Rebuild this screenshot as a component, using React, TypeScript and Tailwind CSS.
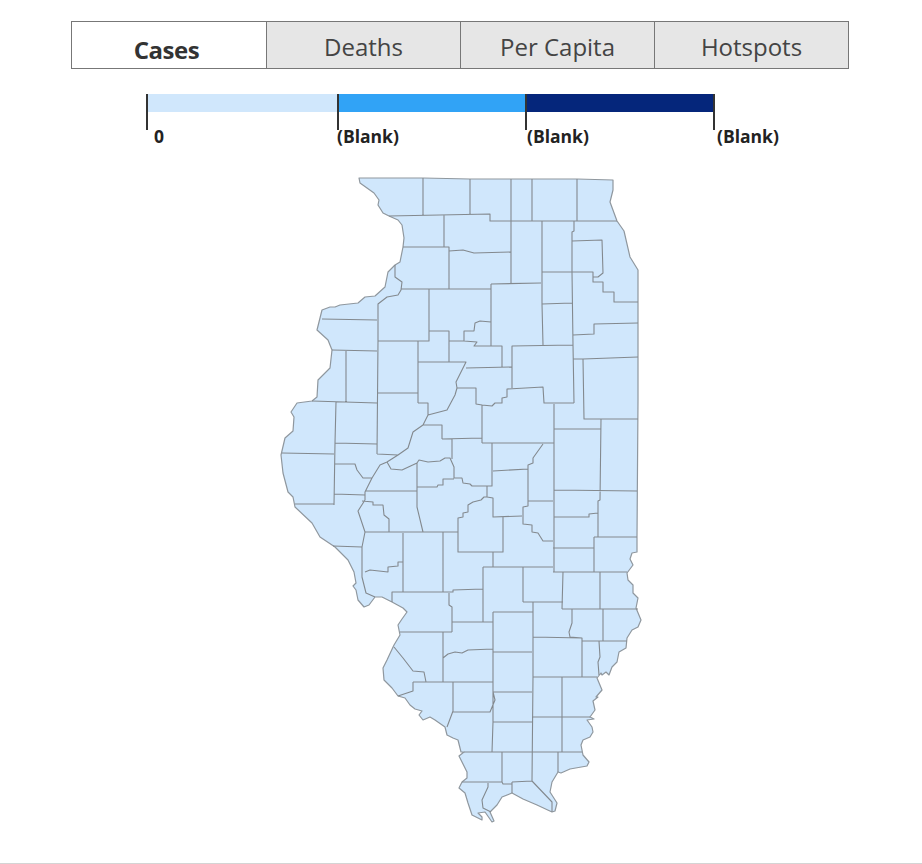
const tabs = ['Cases', 'Deaths', 'Per Capita', 'Hotspots']

const legend = [
  { color: 'bg-[#d0e7fc]', width: 'w-[191px]' },
  { color: 'bg-[#31a3f6]', width: 'w-[188px]' },
  { color: 'bg-[#05267b]', width: 'w-[188px]' },
]

const outline =
  'M359 178 L423 178 L470 179 L511 179 L577 179 L613 180 L613 190 L610 202 L617 221 L624 231 L630 257 L638 270 L638 400 L637 537 L637 552 L632 553 L630 559 L633 565 L627 573 L628 580 L633 585 L633 593 L638 598 L636 608 L641 620 L638 627 L632 630 L627 638 L626 648 L619 652 L617 662 L612 667 L609 675 L606 672 L602 675 L601 673 L597 678 L602 690 L596 697 L598 697 L593 701 L595 710 L590 717 L594 719 L587 720 L592 727 L593 732 L590 737 L583 740 L581 745 L582 750 L583 755 L589 762 L587 766 L570 769 L561 773 L558 772 L552 782 L550 792 L557 803 L555 811 L552 812 L537 805 L523 799 L512 793 L502 797 L497 805 L490 812 L494 821 L492 822 L485 812 L478 813 L482 817 L482 820 L472 815 L468 803 L465 793 L459 788 L462 782 L467 778 L467 772 L459 756 L464 752 L461 752 L458 740 L453 738 L447 735 L445 727 L435 720 L430 717 L423 720 L419 715 L422 711 L415 709 L410 705 L405 698 L398 696 L392 688 L384 680 L383 668 L387 660 L394 645 L400 635 L398 625 L402 619 L407 612 L403 608 L392 602 L382 597 L375 597 L369 605 L364 607 L358 600 L356 590 L353 586 L356 583 L354 572 L348 560 L335 547 L320 537 L312 523 L295 507 L293 497 L288 492 L283 473 L281 455 L285 438 L293 431 L294 417 L291 412 L297 403 L312 401 L317 397 L318 380 L330 368 L332 350 L328 340 L317 330 L322 310 L330 307 L335 307 L340 305 L358 303 L365 297 L375 296 L385 287 L388 272 L395 265 L400 262 L403 247 L404 238 L402 225 L398 220 L389 216 L383 213 L378 205 L379 200 L374 193 L367 188 L360 183 Z'

// county lines, traced from the picture
const counties = [
  'M389 216 L490 214 L490 221 L617 221',
  'M423 178 L423 215 M470 179 L470 214 M511 179 L511 283 M532 179 L532 221 M577 179 L577 221',
  'M444 215 L444 247 M403 247 L449 247 L449 289 M449 251 L463 250 L474 253 L511 252 M401 289 L491 289',
  'M542 221 L542 304 L543 345 M574 221 L574 231 L572 232 L572 272 L573 345 L574 403',
  'M542 272 L572 272 M542 304 L572 303',
  'M572 241 L602 240 L603 273 L598 277 L593 277',
  'M572 272 L593 272 L593 282 L603 282 L603 292 L614 292 L614 302 L638 302',
  'M573 335 L594 334 L594 324 L638 323 M573 359 L583 359 L638 357 M583 359 L584 419 L638 419',
  'M573 345 L512 346 L512 388 M491 284 L541 283 M491 284 L491 346 L502 346 L502 367 M466 368 L512 367',
  'M491 322 L480 321 L475 323 L474 331 L464 331 L464 341 L477 342 L474 346 L491 346',
  'M429 289 L429 331 L449 331 L449 362 M449 341 L464 341 M378 341 L429 341 L429 331',
  'M418 341 L418 403 M418 362 L466 362 L463 368 L456 382 L457 388',
  'M395 265 L395 277 L402 282 L401 290 L398 295 L387 297 L378 304 L378 341 L377 454',
  'M322 319 L377 320 M332 350 L377 351 M346 350 L346 402 M312 401 L377 403 M377 393 L418 393',
  'M418 403 L428 403 L428 415 L423 425 L413 432 L408 448 L398 455 L377 454',
  'M428 415 L447 410 L455 395 L457 388 L476 388 L476 404 L482 405 L482 443',
  'M482 405 L492 406 L495 403 L502 403 L502 398 L507 397 L507 389 L543 387 L544 403 L574 403',
  'M554 404 L554 572 M482 443 L554 443 M554 429 L601 429 M601 419 L600 500 L598 501 L598 537',
  'M554 490 L637 491 M554 517 L589 517 L589 514 L598 513 M553 548 L594 548 M594 537 L637 537 M594 537 L594 572 M553 572 L627 572',
  'M452 439 L452 459 M442 439 L482 438 M423 425 L442 425 L442 439',
  'M492 443 L492 486 L487 486 L487 497 L493 498 L493 517 L522 516 M493 471 L528 469 L528 465 L533 463 L533 458 L543 444',
  'M528 469 L528 506 L523 507 L523 524 L532 525 L532 532 L538 533 L543 541 L553 541 M528 501 L553 501',
  'M503 517 L503 552 L458 552 L458 518 L463 517 L463 513 L468 512 L468 505 L473 502 L481 500 L484 497 L487 497',
  'M493 552 L493 567 L553 567 M483 567 L493 567 M483 567 L483 622 M523 567 L523 602 M563 572 L562 609 M600 572 L600 609',
  'M387 462 L391 469 L402 470 L417 463 L419 460 L428 462 L440 461 L445 458 L450 458 L454 467 L454 478 L462 478 L463 483 L470 484 L472 486 L487 486',
  'M417 463 L417 507 L423 532 M417 487 L437 487 L438 485 L443 485 L443 479 L454 479 M365 491 L417 491',
  'M398 455 L387 462 L380 465 L372 478 L365 492 L365 500 L358 511 L365 532 L362 547 L362 577 L366 593 L375 597',
  'M336 402 L335 443 L334 505 M282 453 L334 454 M295 504 L334 504 M335 443 L377 444 M335 464 L355 464 L357 470 L363 478 L372 478 M334 494 L365 495',
  'M362 501 L373 502 L373 505 L383 505 L384 515 L389 519 L389 532',
  'M365 532 L458 532 M403 533 L403 592 M443 532 L443 592 M333 546 L362 547',
  'M365 572 L370 570 L388 572 L388 567 L398 566 L398 562 L403 562',
  'M392 602 L392 592 L453 592 L453 590 L483 589 M449 593 L449 605 L452 607 L452 632 M400 632 L452 632 M452 622 L493 622',
  'M493 612 L493 692 L495 700 L490 712 L453 712 M493 612 L533 612 M533 602 L533 677 L532 781 M523 602 L563 602',
  'M562 609 L638 609 M572 609 L572 623 L569 632 L570 637 L582 638 L582 677 M533 637 L582 638 M603 609 L603 641 M582 641 L627 641 M599 641 L600 657 L598 662 L599 675',
  'M533 677 L597 677 M562 677 L562 752 M493 652 L532 652 M493 692 L532 692 M493 722 L532 722 M493 692 L493 722 L492 752 M464 752 L582 752 M532 717 L590 717',
  'M502 752 L502 782 M558 752 L558 772 M462 782 L487 782 L502 782 L503 784 L512 784 M512 782 L532 781 L552 802 L552 812 M512 782 L512 793 M488 783 L488 787 L482 800 L483 808 L491 812',
  'M453 682 L453 711 L447 727 M413 682 L493 682 M413 682 L413 691 L398 696 M443 632 L443 682',
  'M394 647 L403 658 L413 671 L424 672 L426 682 M443 658 L448 654 L455 652 L462 653 L468 650 L493 649',
]

export default function App() {
  return (
    <div className="h-[864px] overflow-hidden border-b border-[#d4d4d4] bg-white font-['Open_Sans','Noto_Sans',sans-serif]">
      <div className="ml-[71px] mt-[21px] grid h-[48px] w-[778px] grid-cols-4 border border-[#777]">
        {tabs.map((tab, i) =>
          i === 0 ? (
            <div key={tab} className="flex items-center justify-center pt-[10px] pr-[5px] text-[24px] font-bold tracking-[-0.5px] text-[#333]">
              {tab}
            </div>
          ) : (
            <div key={tab} className="flex items-center justify-center border-l border-[#777] bg-[#e6e6e6] pt-[4px] text-[24px] text-[#444]">
              {tab}
            </div>
          )
        )}
      </div>

      <div className="ml-[146px] mt-[25px] flex h-[36px] w-[569px]">
        {legend.map((item) => (
          <div key={item.color} className={`${item.width} border-l-2 border-[#333]`}>
            <div className={`h-[18px] ${item.color}`} />
          </div>
        ))}
        <div className="border-l-2 border-[#333]" />
      </div>
      <div className="ml-[146px] -mt-[4px] flex text-[17.5px] leading-[20px] font-bold text-[#222]">
        <span className="w-[191px] pl-[8px]">0</span>
        <span className="w-[190px]">(Blank)</span>
        <span className="w-[190px]">(Blank)</span>
        <span>(Blank)</span>
      </div>

      <svg viewBox="278 174 366 652" className="ml-[278px] mt-[28px] block h-[652px] w-[366px]">
        <path d={outline} fill="#d0e7fc" stroke="#8f979e" strokeWidth="1.2" strokeLinejoin="round" />
        <path d={counties.join(' ')} fill="none" stroke="#83898e" strokeWidth="1.1" strokeLinejoin="round" />
      </svg>
    </div>
  )
}
